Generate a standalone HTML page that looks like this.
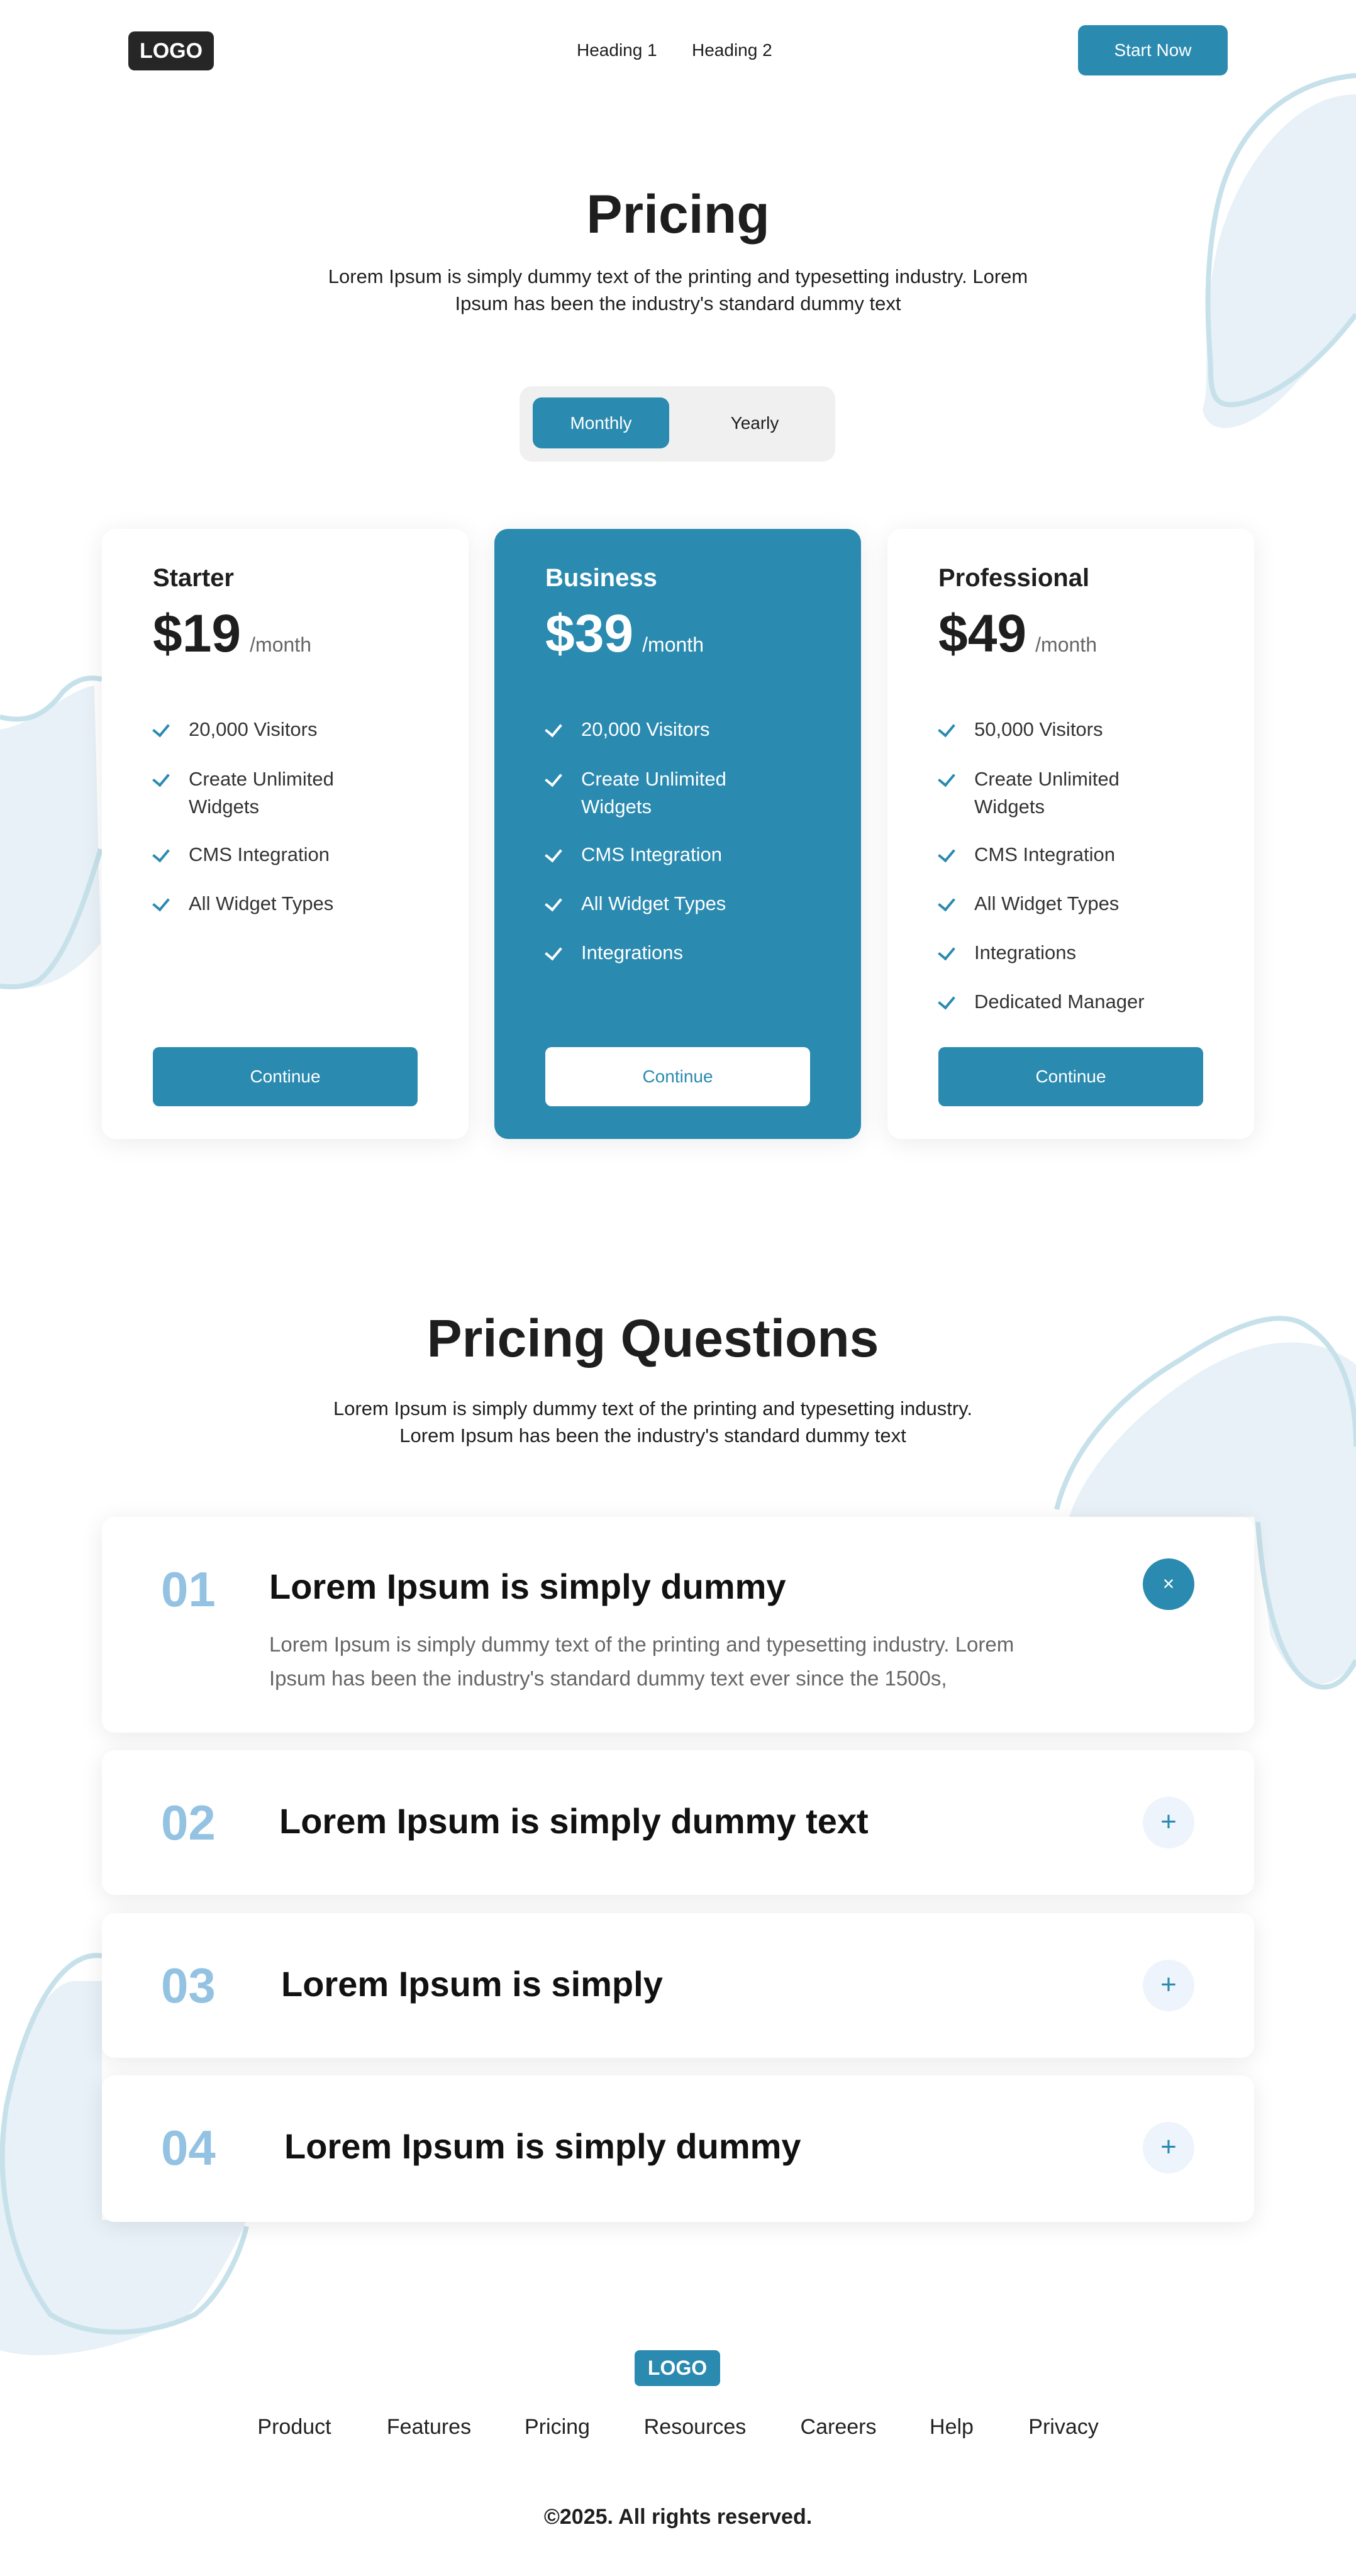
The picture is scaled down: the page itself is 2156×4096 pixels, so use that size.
<!DOCTYPE html>
<html><head><meta charset="utf-8"><style>
*{margin:0;padding:0;box-sizing:border-box}
body{width:2156px;height:4096px;position:relative;background:#fff;font-family:"Liberation Sans",sans-serif;color:#1e1e1e;overflow:hidden}
.a{position:absolute}
.c{text-align:center}
.card{position:absolute;background:#fff;border-radius:22px;box-shadow:0 6px 40px rgba(0,0,0,.08)}
.card h3{position:absolute;left:81px;top:56px;font-size:40px;font-weight:700}
.price{position:absolute;left:81px;top:118px;font-size:84px;font-weight:700;white-space:nowrap}
.price span{font-size:32px;font-weight:400;color:#666;margin-left:14px}
.feat{position:absolute;left:138px;font-size:31px;line-height:44px;color:#333}
.feat:before{content:"";position:absolute;left:-52px;top:8px;width:12px;height:20px;border-right:4px solid #2a8ab0;border-bottom:4px solid #2a8ab0;transform:rotate(40deg)}
.btn{position:absolute;left:81px;top:824px;width:421px;height:94px;border-radius:10px;background:#2a8ab0;color:#fff;font-size:28px;line-height:94px;text-align:center}
.biz .feat,.biz h3,.biz .price,.biz .price span{color:#fff}
.biz .feat:before{border-color:#fff}
.faq{position:absolute;left:162px;width:1832px;background:#fff;border-radius:20px;box-shadow:0 6px 36px rgba(0,0,0,.09)}
.num{position:absolute;left:94px;font-size:78px;font-weight:700;color:#93c2e2}
.q{position:absolute;font-size:56px;font-weight:700;color:#111;white-space:nowrap}
.pl{position:absolute;left:1655px;width:82px;height:82px;border-radius:50%;background:#eef4fc;color:#2a8ab0;font-size:44px;line-height:80px;text-align:center}
.fl{position:absolute;top:3840px;font-size:34px;color:#222;transform:translateX(-50%)}
</style></head><body>
<svg class="a" style="left:0;top:0" width="2156" height="4096">
<g fill="#e7f1f7">
<path d="M2156 150 C2040 150 1950 300 1930 420 C1910 540 1925 620 1912 650 C1920 700 1990 690 2060 610 C2110 560 2140 520 2156 500Z"/>
<path d="M0 1160 C60 1150 100 1100 150 1090 L160 1500 C120 1550 70 1580 0 1570Z"/>
<path d="M2156 2170 C2080 2110 1980 2130 1880 2200 C1780 2270 1720 2350 1700 2412 L1994 2412 L2020 2600 C2060 2690 2110 2700 2156 2640Z"/>
<path d="M120 3150 C60 3150 10 3300 0 3400 L0 3737 C80 3760 210 3730 300 3680 C340 3640 380 3560 392 3530 L162 3530 L162 3150Z"/>
</g>
<g fill="none" stroke="#c7e1eb" stroke-width="8">
<path d="M2156 120 C2040 130 1960 210 1935 330 C1910 450 1925 560 1925 590 C1925 640 1940 650 1980 640 C2050 620 2110 560 2156 500"/>
<path d="M0 1140 C40 1150 70 1140 100 1100 C120 1080 140 1075 162 1080 M160 1350 C130 1450 100 1530 60 1560 C40 1570 20 1570 0 1568"/>
<path d="M1680 2400 C1700 2320 1760 2230 1880 2160 C1970 2100 2040 2080 2080 2110 C2140 2150 2156 2230 2156 2300 M2000 2420 C2010 2560 2040 2660 2090 2680 C2120 2690 2140 2670 2156 2640"/>
<path d="M162 3110 C100 3100 40 3200 10 3350 C-10 3480 20 3600 80 3680 C140 3720 240 3715 310 3680 C350 3650 380 3590 392 3540"/>
</g>
</svg>

<div class="a c" style="left:204px;top:50px;width:136px;height:62px;background:#262626;border-radius:10px;color:#fff;font-weight:700;font-size:34px;line-height:62px">LOGO</div>
<div class="a" style="left:917px;top:64px;font-size:28px">Heading 1</div>
<div class="a" style="left:1100px;top:64px;font-size:28px">Heading 2</div>
<div class="a c" style="left:1714px;top:40px;width:238px;height:80px;background:#2a8ab0;border-radius:12px;color:#fff;font-size:28px;line-height:80px">Start Now</div>

<div class="a c" style="left:0;width:2156px;top:292px;font-size:86px;font-weight:700">Pricing</div>
<div class="a c" style="left:340px;width:1476px;top:418px;font-size:31px;line-height:43px">Lorem Ipsum is simply dummy text of the printing and typesetting industry. Lorem<br>Ipsum has been the industry's standard dummy text</div>

<div class="a" style="left:826px;top:614px;width:502px;height:120px;background:#f0f0f0;border-radius:20px"></div>
<div class="a c" style="left:847px;top:632px;width:217px;height:81px;background:#2a8ab0;border-radius:14px;color:#fff;font-size:28px;line-height:81px">Monthly</div>
<div class="a c" style="left:1100px;top:632px;width:200px;font-size:28px;line-height:81px">Yearly</div>

<div class="card" style="left:162px;top:841px;width:583px;height:970px">
<h3>Starter</h3><div class="price">$19<span>/month</span></div>
<div class="feat" style="top:297px">20,000 Visitors</div>
<div class="feat" style="top:376px">Create Unlimited<br>Widgets</div>
<div class="feat" style="top:496px">CMS Integration</div>
<div class="feat" style="top:574px">All Widget Types</div>
<div class="btn">Continue</div></div>

<div class="card biz" style="left:786px;top:841px;width:583px;height:970px;background:#2a8ab0">
<h3>Business</h3><div class="price">$39<span>/month</span></div>
<div class="feat" style="top:297px">20,000 Visitors</div>
<div class="feat" style="top:376px">Create Unlimited<br>Widgets</div>
<div class="feat" style="top:496px">CMS Integration</div>
<div class="feat" style="top:574px">All Widget Types</div>
<div class="feat" style="top:652px">Integrations</div>
<div class="btn" style="background:#fff;color:#2a8ab0">Continue</div></div>

<div class="card" style="left:1411px;top:841px;width:583px;height:970px">
<h3>Professional</h3><div class="price">$49<span>/month</span></div>
<div class="feat" style="top:297px">50,000 Visitors</div>
<div class="feat" style="top:376px">Create Unlimited<br>Widgets</div>
<div class="feat" style="top:496px">CMS Integration</div>
<div class="feat" style="top:574px">All Widget Types</div>
<div class="feat" style="top:652px">Integrations</div>
<div class="feat" style="top:730px">Dedicated Manager</div>
<div class="btn">Continue</div></div>

<div class="a c" style="left:0;width:2076px;top:2080px;font-size:84px;font-weight:700">Pricing Questions</div>
<div class="a c" style="left:340px;width:1396px;top:2218px;font-size:31px;line-height:43px">Lorem Ipsum is simply dummy text of the printing and typesetting industry.<br>Lorem Ipsum has been the industry's standard dummy text</div>

<div class="faq" style="top:2412px;height:343px">
<div class="num" style="top:70px">01</div>
<div class="q" style="left:266px;top:78px">Lorem Ipsum is simply dummy</div>
<div class="a" style="left:266px;top:176px;width:1500px;font-size:33px;line-height:54px;color:#666">Lorem Ipsum is simply dummy text of the printing and typesetting industry. Lorem<br>Ipsum has been the industry's standard dummy text ever since the 1500s,</div>
<div class="pl" style="top:66px;background:#2a8ab0;color:#fff;font-size:32px">×</div>
</div>
<div class="faq" style="top:2783px;height:230px"><div class="num" style="top:70px">02</div><div class="q" style="left:282px;top:80px">Lorem Ipsum is simply dummy text</div><div class="pl" style="top:74px">+</div></div>
<div class="faq" style="top:3042px;height:230px"><div class="num" style="top:70px">03</div><div class="q" style="left:285px;top:80px">Lorem Ipsum is simply</div><div class="pl" style="top:74px">+</div></div>
<div class="faq" style="top:3300px;height:233px"><div class="num" style="top:70px">04</div><div class="q" style="left:290px;top:80px">Lorem Ipsum is simply dummy</div><div class="pl" style="top:74px">+</div></div>

<div class="a c" style="left:1009px;top:3737px;width:136px;height:57px;background:#2a8ab0;border-radius:8px;color:#fff;font-weight:700;font-size:32px;line-height:57px">LOGO</div>
<div class="fl" style="left:468px">Product</div>
<div class="fl" style="left:682px">Features</div>
<div class="fl" style="left:886px">Pricing</div>
<div class="fl" style="left:1105px">Resources</div>
<div class="fl" style="left:1333px">Careers</div>
<div class="fl" style="left:1513px">Help</div>
<div class="fl" style="left:1691px">Privacy</div>
<div class="a c" style="left:0;width:2156px;top:3983px;font-size:34px;font-weight:700">©2025. All rights reserved.</div>
</body></html>
